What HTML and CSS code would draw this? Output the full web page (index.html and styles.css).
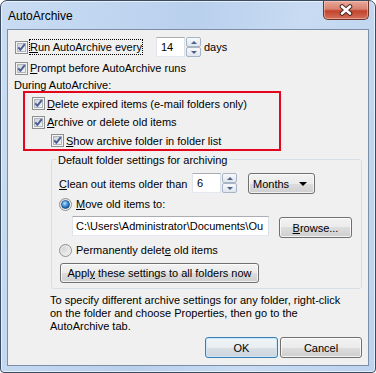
FILE: index.html
```html
<!DOCTYPE html>
<html lang="en">
<head>
  <meta charset="UTF-8">
  <title>AutoArchive</title>
  <link rel="stylesheet" href="styles.css">
</head>
<body>
  <svg class="defs" width="0" height="0">
    <defs>
      <linearGradient id="cbFill" x1="0" y1="0" x2="1" y2="1">
        <stop offset="0" stop-color="#cbcfd5"/>
        <stop offset="1" stop-color="#f6f6f6"/>
      </linearGradient>
      <radialGradient id="rdFill" cx="0.35" cy="0.35" r="0.8">
        <stop offset="0" stop-color="#d4d4d4"/>
        <stop offset="1" stop-color="#fbfbfb"/>
      </radialGradient>
      <radialGradient id="rdDot" cx="0.4" cy="0.35" r="0.7">
        <stop offset="0" stop-color="#b7e1ff"/>
        <stop offset="0.6" stop-color="#2f84d0"/>
        <stop offset="1" stop-color="#17467e"/>
      </radialGradient>
      <symbol id="check" viewBox="0 0 13 13">
        <rect x="0.5" y="0.5" width="12" height="12" fill="#f4f4f4" stroke="#8e8f8f"/>
        <rect x="2.5" y="2.5" width="8" height="8" fill="url(#cbFill)" stroke="#b1b6bd"/>
        <path d="M3.2 6.4 L5.4 8.8 L9.8 3.2" fill="none" stroke="#4b5f95" stroke-width="2"/>
      </symbol>
      <symbol id="radio" viewBox="0 0 13 13">
        <circle cx="6.5" cy="6.5" r="6" fill="url(#rdFill)" stroke="#8e8f8f"/>
        <circle cx="6.5" cy="6.5" r="4.5" fill="none" stroke="#e4e4e4"/>
      </symbol>
      <symbol id="radioOn" viewBox="0 0 13 13">
        <circle cx="6.5" cy="6.5" r="6" fill="url(#rdFill)" stroke="#8e8f8f"/>
        <circle cx="6.5" cy="6.5" r="4" fill="url(#rdDot)" stroke="#1c4a83" stroke-width="0.7"/>
      </symbol>
    </defs>
  </svg>

  <div class="window">
    <div class="titlebar">
      <span class="title">AutoArchive</span>
      <div class="close">
        <svg width="16" height="12" viewBox="0 0 16 12">
          <path d="M4 2.5 L12 9.5 M12 2.5 L4 9.5" stroke="#4a2a26" stroke-width="4.6" stroke-linecap="round"/>
          <path d="M4 2.5 L12 9.5 M12 2.5 L4 9.5" stroke="#fff" stroke-width="2.6" stroke-linecap="round"/>
        </svg>
      </div>
    </div>

    <div class="client">
      <div class="row row-run">
        <svg class="cb"><use href="#check"/></svg>
        <span class="focus"><u>R</u>un AutoArchive every</span>
        <div class="spin spin-days">
          <span class="textbox">14</span>
          <span class="spin-btns">
            <span class="spin-btn"><i class="arr up"></i></span>
            <span class="spin-btn"><i class="arr down"></i></span>
          </span>
        </div>
        <span class="after-spin">days</span>
      </div>

      <div class="row row-prompt">
        <svg class="cb"><use href="#check"/></svg>
        <span class="lbl"><u>P</u>rompt before AutoArchive runs</span>
      </div>

      <div class="section-label">During AutoArchive:</div>

      <div class="row row-sub row-delete">
        <svg class="cb"><use href="#check"/></svg>
        <span class="lbl"><u>D</u>elete expired items (e-mail folders only)</span>
      </div>
      <div class="row row-sub row-archive">
        <svg class="cb"><use href="#check"/></svg>
        <span class="lbl"><u>A</u>rchive or delete old items</span>
      </div>
      <div class="row row-show">
        <svg class="cb"><use href="#check"/></svg>
        <span class="lbl"><u>S</u>how archive folder in folder list</span>
      </div>

      <div class="group">
        <div class="group-title">Default folder settings for archiving</div>

        <div class="row row-clean">
          <span class="clean-lbl"><u>C</u>lean out items older than</span>
          <div class="spin">
            <span class="textbox">6</span>
            <span class="spin-btns">
              <span class="spin-btn"><i class="arr up"></i></span>
              <span class="spin-btn"><i class="arr down"></i></span>
            </span>
          </div>
          <div class="combo">
            <span>Months</span>
            <i class="arr combo-arr"></i>
          </div>
        </div>

        <div class="row row-radio row-move">
          <svg class="rd"><use href="#radioOn"/></svg>
          <span class="lbl"><u>M</u>ove old items to:</span>
        </div>

        <div class="row row-path">
          <span class="textbox path">C:\Users\Administrator\Documents\Ou</span>
          <span class="btn browse"><span><u>B</u>rowse...</span></span>
        </div>

        <div class="row row-radio row-perm">
          <svg class="rd"><use href="#radio"/></svg>
          <span class="lbl">Permanently delet<u>e</u> old items</span>
        </div>

        <span class="btn apply"><span>Appl<u>y</u> these settings to all folders now</span></span>
      </div>

      <p class="note">To specify different archive settings for any folder, right-click<br>on the folder and choose Properties, then go to the<br>AutoArchive tab.</p>

      <div class="actions">
        <span class="btn btn-default ok">OK</span>
        <span class="btn cancel">Cancel</span>
      </div>
    </div>

    <div class="highlight"></div>
  </div>
</body>
</html>
```

FILE: styles.css
```css
* {
  box-sizing: border-box;
}
body {
  margin: 0;
  font-family: "Liberation Sans", Arial, sans-serif;
  font-size: 11px;
  color: #000;
  background: #fff;
}
.defs {
  position: absolute;
}
u {
  text-underline-offset: 1px;
}

/* window frame */
.window {
  position: relative;
  width: 376px;
  height: 373px;
  border: 1px solid #3b4b60;
  border-radius: 7px 7px 4px 4px;
  background: linear-gradient(100deg, #c9dcf3, #b9d0ed 45%, #c8dbf2 70%, #bcd2ee);
  box-shadow: inset 0 0 0 1px rgba(255,255,255,0.6);
  padding: 0 6px 6px;
  display: flex;
  flex-direction: column;
}
.titlebar {
  height: 28px;
  display: flex;
  align-items: flex-start;
}
.title {
  padding: 7px 0 0 1px;
  line-height: 16px;
  font-size: 12px;
}
.close {
  margin-left: auto;
  width: 46px;
  height: 19px;
  border: 1px solid #6d3429;
  border-top: none;
  border-radius: 0 0 5px 5px;
  background: linear-gradient(#eaa899, #d8826f 45%, #c4432d 55%, #d3705a);
  box-shadow: inset 0 0 0 1px rgba(255,220,210,0.45);
  display: flex;
  align-items: center;
  justify-content: center;
}
.client {
  flex: 1;
  border: 1px solid #7b8ea6;
  background: #f0f0f0;
  padding-top: 7px;
}

/* rows */
.row {
  display: flex;
  align-items: center;
  white-space: nowrap;
}
.cb, .rd {
  width: 13px;
  height: 13px;
  flex: none;
}
.lbl {
  margin-left: 2px;
}
.row-run {
  height: 20px;
  padding-left: 7px;
}
.focus {
  margin-left: 1px;
  width: 114px;
  border: 1px dotted #000;
  line-height: 14px;
}
.row-prompt {
  height: 18px;
  margin-top: 2px;
  padding-left: 7px;
}
.section-label {
  height: 17px;
  line-height: 17px;
  padding-left: 6px;
}
.row-sub {
  padding-left: 24px;
}
.row-delete {
  height: 19px;
}
.row-archive {
  height: 18px;
}
.row-show {
  height: 19px;
  padding-left: 43px;
}

/* spinner textboxes */
.spin {
  display: flex;
  height: 20px;
}
.spin-days {
  margin-left: 13px;
}
.textbox {
  display: block;
  width: 29px;
  height: 20px;
  border: 1px solid;
  border-color: #abadb3 #dbdfe6 #e3e9ef #e2e3ea;
  background: #fff;
  padding-left: 4px;
  line-height: 18px;
}
.spin-btns {
  display: flex;
  flex-direction: column;
  margin-left: 1px;
  width: 15px;
}
.spin-btn {
  flex: 1;
  border: 1px solid #a7b5c5;
  border-radius: 2px;
  background: linear-gradient(#f7f9fc, #dfe6ef);
  display: flex;
  align-items: center;
  justify-content: center;
}
.arr {
  width: 0;
  height: 0;
  border-left: 3px solid transparent;
  border-right: 3px solid transparent;
}
.arr.up {
  border-bottom: 3px solid #4d6185;
}
.arr.down {
  border-top: 3px solid #4d6185;
}
.after-spin {
  margin-left: 3px;
}

/* group box */
.group {
  margin: 9px 6px 0 43px;
  border: 1px solid #d5dfe5;
  border-radius: 3px;
  padding: 0 0 5px 7px;
}
.group-title {
  width: max-content;
  margin: -8px 0 0 -3px;
  padding: 0 2px;
  line-height: 16px;
  background: #f0f0f0;
}
.row-clean {
  height: 21px;
  margin-top: 5px;
}
.clean-lbl {
  width: 133px;
}
.row-clean .spin {
  margin-top: -1px;
}
.combo {
  margin-left: 11px;
  width: 67px;
  height: 21px;
  border: 1px solid #707070;
  border-radius: 3px;
  background: linear-gradient(#f2f2f2, #ebebeb 50%, #dddddd 50%, #cfcfcf);
  box-shadow: inset 0 0 0 1px rgba(255,255,255,0.7);
  display: flex;
  align-items: center;
  padding: 0 7px 0 4px;
}
.combo-arr {
  margin-left: auto;
  border-left-width: 4px;
  border-right-width: 4px;
  border-top: 4px solid #000;
}
.row-radio .lbl {
  margin-left: 4px;
}
.row-move {
  height: 18px;
  margin-top: 1px;
}
.row-path {
  height: 23px;
  margin-top: 2px;
  padding-left: 13px;
  align-items: flex-start;
}
.textbox.path {
  width: 197px;
  margin-top: 1px;
  overflow: hidden;
  padding-left: 3px;
}
.row-perm {
  height: 18px;
  margin-top: 3px;
}

/* buttons */
.btn {
  display: flex;
  align-items: center;
  justify-content: center;
  border: 1px solid #707070;
  border-radius: 3px;
  background: linear-gradient(#f2f2f2, #ebebeb 50%, #dddddd 50%, #cfcfcf);
  box-shadow: inset 0 0 0 1px rgba(255,255,255,0.75);
  white-space: nowrap;
}
.browse {
  margin: 2px 0 0 10px;
  width: 73px;
  height: 21px;
}
.apply {
  margin: 4px 0 0 1px;
  width: 199px;
  height: 20px;
}
.note {
  margin: 5px 0 0 42px;
  line-height: 13px;
  white-space: nowrap;
}
.actions {
  display: flex;
  justify-content: flex-end;
  gap: 2px;
  margin-top: 4px;
  padding-right: 6px;
}
.ok {
  width: 73px;
  height: 21px;
}
.cancel {
  width: 82px;
  height: 21px;
}
.btn-default {
  border-color: #3c7fb1;
  box-shadow: inset 0 0 0 1px #c9e7f9;
  background: linear-gradient(#f0f4f7, #e8eef2 50%, #d8e0e6 50%, #cdd6dc);
}

/* red annotation drawn over the dialog */
.highlight {
  position: absolute;
  left: 22px;
  top: 90px;
  width: 258px;
  height: 60px;
  border: 2px solid #e3061d;
}
```
